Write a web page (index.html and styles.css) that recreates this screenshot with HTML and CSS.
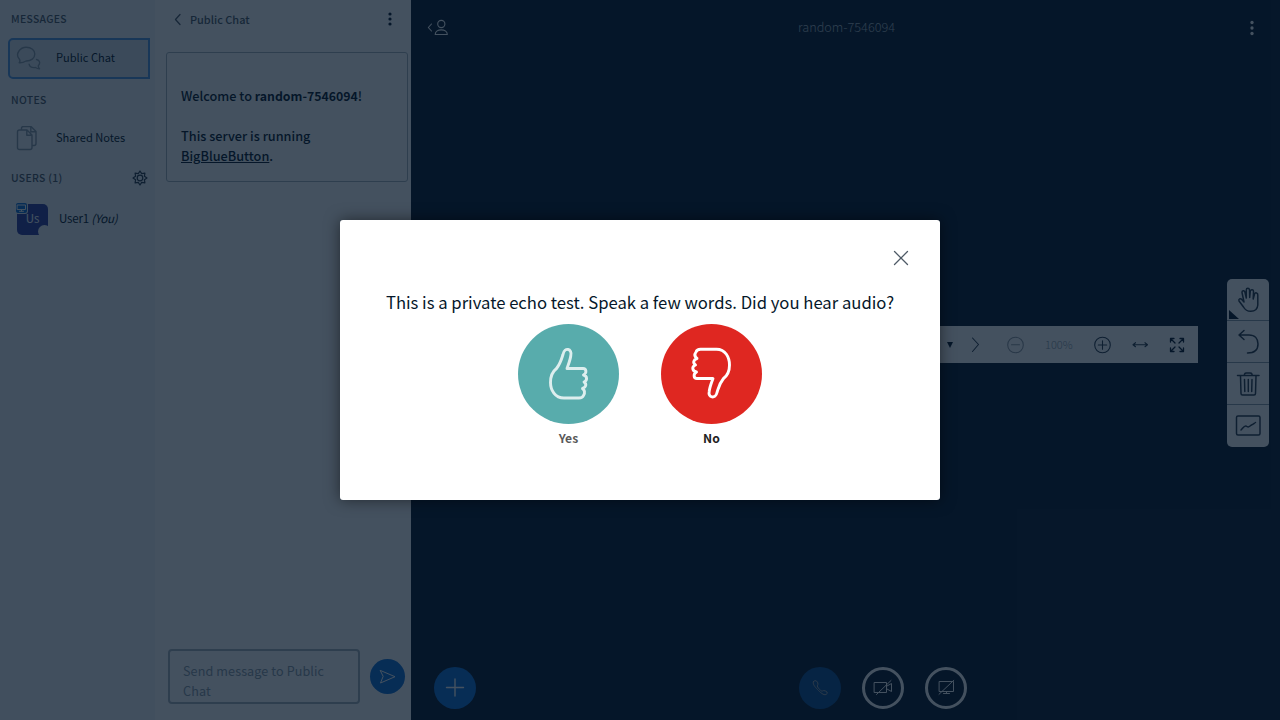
FILE: index.html
```html
<!DOCTYPE html>
<html lang="en">
<head>
<meta charset="utf-8">
<title>random-7546094</title>
<link rel="stylesheet" href="styles.css">
</head>
<body>
<div class="app">
  <aside class="sidebar">
    <h2 class="heading">MESSAGES</h2>
    <div class="item item-active">
      <svg class="item-icon" width="26" height="26" viewBox="0 0 26 26"><path d="M3.200 16.700 C4.500 15 4.300 14.200 3.100 12.800 C-1 8 4 1.300 10.200 1.300 C15.500 1.300 18.800 4.300 18.800 8 C18.800 12.200 15 15.200 10 15 C7.500 16.500 5.500 16.900 3.200 16.700 Z M20.500 13.500 C24 14 24.500 17.500 22.300 19.700 C22.200 21.100 22.500 21.800 23.500 22.800 C21.700 22.900 20.700 22.300 19.500 21.500 C16 21.900 13.500 20.500 13.100 18.100"/></svg>
      <span class="label-text">Public Chat</span>
    </div>
    <h2 class="heading heading-notes">NOTES</h2>
    <div class="item item-notes">
      <svg class="item-icon" width="26" height="26" viewBox="0 0 26 26"><path d="M1.500 6 Q1.500 4 3.500 4 H11 L16 9 V21.500 Q16 23.500 14 23.500 H3.500 Q1.500 23.500 1.500 21.500 Z M10.800 4 V9.200 H16 M5.500 3.500 V2.500 Q5.500 .5 7.500 .5 H15 L20 5.500 V17.500 Q20 19.500 18 19.500 H16.500 M14.800 .5 V5.700 H20"/></svg>
      <span class="label-text">Shared Notes</span>
    </div>
    <div class="users-head">
      <h2 class="heading heading-users">USERS (1)</h2>
      <svg class="gear" width="16" height="16" viewBox="0 0 16 16"><path d="M8 1 L9.700 3.600 L12.900 3.100 L12.400 6.300 L15 8 L12.400 9.700 L12.900 12.900 L9.700 12.400 L8 15 L6.300 12.400 L3.100 12.900 L3.600 9.700 L1 8 L3.600 6.300 L3.100 3.100 L6.300 3.600 Z"/><circle cx="8" cy="8" r="2.800"/></svg>
    </div>
    <div class="user">
      <div class="avatar">Us
        <svg class="presenter" width="11" height="10" viewBox="0 0 11 10"><path d="M1.500 2 H9.500 V6.500 H1.500 Z M5.500 6.500 V8 M3.500 8.300 H7.500"/></svg>
        <span class="presence"></span>
      </div>
      <span class="user-name">User1 <i>(You)</i></span>
    </div>
  </aside>

  <section class="chat">
    <header class="chat-head">
      <svg width="8" height="14" viewBox="0 0 8 14"><path d="M6 2.500 L1.500 7.500 L6 12.500"/></svg>
      <h1 class="chat-title">Public Chat</h1>
      <svg class="dots" width="4" height="14" viewBox="0 0 4 14"><circle cx="2" cy="2" r="1.600"/><circle cx="2" cy="7" r="1.600"/><circle cx="2" cy="12" r="1.600"/></svg>
    </header>
    <div class="welcome">
      <p>Welcome to <b>random-7546094</b>!</p>
      <p>This server is running <u>BigBlueButton</u>.</p>
    </div>
    <footer class="composer">
      <div class="message-box">Send message to Public Chat</div>
      <div class="send"><svg width="18" height="16" viewBox="0 0 18 16"><path d="M1.500 1.500 L16 7.700 L1.500 14 L4 7.700 Z"/></svg></div>
    </footer>
  </section>

  <main class="stage">
    <header class="nav">
      <svg class="nav-user" width="22" height="18" viewBox="0 0 22 18"><path d="M4.500 5 L1.300 8.500 L4.500 12 M8.200 15.500 C8.200 9.300 20.300 9.300 20.300 15.500 Z"/><circle cx="14.300" cy="5" r="3.600"/></svg>
      <span class="nav-title">random-7546094</span>
      <svg class="nav-dots dots" width="4" height="16" viewBox="0 0 4 16"><circle cx="2" cy="2.500" r="1.650"/><circle cx="2" cy="8" r="1.650"/><circle cx="2" cy="13.500" r="1.650"/></svg>
    </header>
    <div class="workspace">
      <div class="slide-bar">
        <svg class="line" width="258" height="37" viewBox="0 0 258 37"><path class="solid" d="M7 16 H13 L10 22 Z"/><path d="M32.500 12 L38.500 18.500 L32.500 25.500"/><g class="off"><circle cx="75.500" cy="19" r="7.800"/><path d="M71.500 18.700 H79.500"/></g><circle cx="162.500" cy="19" r="7.800"/><path d="M158.300 19 H166.700 M162.500 14.800 V23.200 M193 18.700 H207.500 M195.500 16.700 L193 18.700 L195.500 20.700 M205 16.700 L207.500 18.700 L205 20.700"/><path class="heavy" d="M230.500 16 V12.500 H234 M230.500 12.500 L235 17 M240 12.500 H243.500 V16 M243.500 12.500 L239 17 M230.500 22 V25.500 H234 M230.500 25.500 L235 21 M240 25.500 H243.500 V22 M243.500 25.500 L239 21"/></svg>
        <span class="zoom-value">100%</span>
      </div>
      <div class="tools">
        <div class="tool"><svg width="42" height="42" viewBox="0 0 42 42"><path class="solid" d="M2 31 V40 H12 Z"/><path d="M16.500 28 L12 22 C11.200 20 13.400 18.800 14.800 20.500 L17 23 L15 13.500 C14.800 11.500 17.300 11 17.900 13 L19.300 19 V11 C19.300 8.700 22.300 8.700 22.500 11 L22.700 18.500 L23.300 12 C24 10 26.700 10.500 26.500 12.500 L26.200 20 L27.500 15 C28.300 13 31 13.800 30.800 16 V26 C30.500 30 27.800 32.300 23.800 32.300 C20.500 32.300 18 30.800 16.500 28 Z"/></svg></div>
        <div class="tool"><svg width="42" height="42" viewBox="0 0 42 42"><path d="M17 9.500 L12 14 L17 18.500 M12 14 H22 C28 14 31 18 31 23 C31 29 27 32 20.500 32"/></svg></div>
        <div class="tool"><svg width="42" height="42" viewBox="0 0 42 42"><path d="M10.500 12.500 H32 M17.500 12 V11 Q18 10 19.500 10 H23 Q24.500 10 25 11 V12 M13.500 13 L14 30.500 Q14 32 15.500 32 H27 Q28.500 32 28.500 30.500 L29 13 M17.500 16.500 L17.800 28.500 M21.300 16.500 V28.500 M25 16.500 L24.700 28.500"/></svg></div>
        <div class="tool"><svg width="42" height="42" viewBox="0 0 42 42"><rect x="9.500" y="11" width="23.500" height="19" rx="1.500"/><path d="M14 25 C16 23 17 20.500 19 21 C22 23.500 22.500 21 24.500 20 C26 19.500 27 18.500 28.500 17.500"/></svg></div>
      </div>
    </div>
    <footer class="actions">
      <div class="round plus"><svg width="20" height="20" viewBox="0 0 20 20"><path d="M1.500 9.500 H18.500 M10 1 V18"/></svg></div>
      <div class="media">
        <div class="round phone"><svg width="20" height="20" viewBox="0 0 20 20"><path d="M3.500 3.500 Q5 1.800 6.500 3 Q8.500 5 7.900 6.500 C6.500 8.500 8 9.500 9.500 11.300 C11 13 12 13.500 13.500 12.600 Q15 12.300 17 14 Q18 15.500 16 16.500 C13.500 17.500 10.500 14.500 7.500 11.500 C5 9 2 5.500 3.500 3.500 Z"/></svg></div>
        <div class="round outlined"><svg width="20" height="20" viewBox="0 0 20 20"><path d="M1.500 4.500 H13.500 V14.500 H1.500 Z M14 8 L18.500 5.500 V13.500 L14 11 M3.500 16.500 L18 2.500"/></svg></div>
        <div class="round outlined"><svg width="20" height="20" viewBox="0 0 20 20"><path d="M3.500 3.500 H17.500 V13.500 H3.500 Z M10.500 13.500 V15.500 M7.500 15.500 H13.500 M3 16.300 L17.800 2.300"/></svg></div>
      </div>
    </footer>
  </main>
</div>

<div class="overlay">
  <div class="modal">
    <svg class="close" width="16" height="16" viewBox="0 0 16 16"><path d="M1.500 1.500 L14.500 14.500 M14.500 1.500 L1.500 14.500"/></svg>
    <p class="question">This is a private echo test. Speak a few words. Did you hear audio?</p>
    <div class="answers">
      <div class="answer answer-yes">
        <div class="disc disc-yes"><svg width="44" height="56" viewBox="0 0 44 56"><path d="M20 22.500 H36 C39.500 22.500 40 27 36.500 29 C40.500 30 40.500 34.500 37 36 C40 38 39 41.500 35.500 42.500 C38 44.500 38 47 36.500 49.500 Q35.500 52 32 52 H17 C8 52 3.500 44 3.500 36.500 C3.500 30.500 5 26 9.500 22.500 C13.500 17.500 14.500 13 16 8.500 C17.500 .7 25.500 2.500 23.800 9.500 C23.300 14 21.500 18 20 22.500 Z"/></svg></div>
        <span class="answer-label">Yes</span>
      </div>
      <div class="answer">
        <div class="disc disc-no"><svg width="44" height="56" viewBox="0 0 44 56"><path d="M21 23.500 H37 C40.500 23.500 41 28 37.500 30 C42 31 42.500 35.500 38.500 37 C41.500 39 40.500 42.500 37 43.500 C39.500 45.500 39.500 48 38 50 Q37 52.800 33.500 52.800 H17.500 C8.500 52.800 4.500 44.500 4.500 37 C4.500 31 6.500 26.500 10.500 23.500 C15 18 15.500 14 17 9.500 C18.500 2.500 26.300 4.500 24.800 10.500 C24.300 15 22.800 18.500 21 23.500 Z"/></svg></div>
        <span class="answer-label">No</span>
      </div>
    </div>
  </div>
</div>
</body>
</html>
```

FILE: styles.css
```css
* { box-sizing: border-box; }
body {
  margin: 0;
  overflow: hidden;
  font-family: "Noto Sans CJK SC", "Open Sans", sans-serif;
  font-size: 12px;
  color: #06172a;
}
h1, h2, p { margin: 0; }
svg { display: block; flex: none; fill: none; stroke: currentColor; stroke-linecap: round; stroke-linejoin: round; }
.app { display: flex; width: 1280px; height: 720px; }

.sidebar { width: 155px; flex: none; background: #f3f6f9; padding-top: 9px; }
.heading { height: 20px; padding-left: 11px; font-size: 10.4px; line-height: 20px; font-weight: 500; letter-spacing: .3px; color: #4e5a66; }
.item { display: flex; align-items: center; height: 41px; margin: 9px 5px 0 8px; padding-left: 8px; white-space: nowrap; }
.item-active { background: #dce4ec; border: 2px solid #4f96e4; border-radius: 5px 0 0 5px; padding-left: 6px; }
.item-icon { color: #8b9aa8; margin-right: 14px; stroke-width: 1.4; }
.label-text { font-size: 11.1px; line-height: 18px; padding-bottom: 4px; }
.heading-notes { margin-top: 11px; }
.item-notes { margin-top: 8px; }
.users-head { display: flex; align-items: center; justify-content: space-between; padding-right: 7px; margin-top: 9px; }
.gear { color: #2a394a; stroke-width: 1.2; }
.user { display: flex; align-items: center; margin-top: 15px; padding-left: 17px; height: 32px; }
.avatar { position: relative; width: 31px; height: 31px; border-radius: 5px; background: #303f9f; color: #fff; font-size: 11.5px; line-height: 29px; text-align: center; }
.presenter { position: absolute; left: -1px; top: -1px; background: #0f70d7; color: #fff; border-radius: 2px; box-shadow: 0 0 0 1px #f3f6f9; }
.presence { position: absolute; right: -3px; bottom: -3px; width: 13px; height: 13px; border-radius: 50%; background: #f3f6f9; }
.user-name { margin-left: 11px; padding-bottom: 3px; font-size: 11.5px; letter-spacing: -.2px; }

.chat { width: 256px; flex: none; background: #fff; display: flex; flex-direction: column; }
.chat-head { display: flex; align-items: center; height: 38px; padding: 0 19.500px 0 19px; color: #4e5a66; }
.chat-head svg { stroke-width: 1.3; }
.chat-title { margin-left: 8px; font-size: 10.95px; line-height: 20px; font-weight: 500; flex: 1; }
.chat-head .dots, .nav .dots { stroke-width: 0; }
.dots { fill: currentColor; stroke: none; color: #06172a; }
.welcome { margin: 14px 3px 0 11px; height: 130px; border: 1px solid #a7b3bd; border-radius: 3px; padding: 33px 60px 0 14px; font-size: 12.7px; line-height: 20px; font-weight: 500; color: #06172a; }
.welcome p { margin-right: -30px; }
.welcome p + p { margin: 20px 0 0; }
.welcome b { font-weight: 700; font-size: 12.3px; }
.welcome u { text-underline-offset: 1px; }
.composer { display: flex; margin-top: auto; padding: 0 6px 16px 13px; justify-content: space-between; align-items: center; }
.message-box { width: 192px; height: 55px; border: 2px solid #a7b3bd; border-radius: 4px; padding: 10px 20px 0 13px; font-size: 12.6px; line-height: 20px; letter-spacing: .1px; color: #8b9aa8; overflow: hidden; }
.send { width: 35px; height: 35px; border-radius: 50%; background: #0f70d7; color: #fff; display: flex; align-items: center; justify-content: center; }

.stage { flex: 1; display: flex; flex-direction: column; background: #06172a; color: #fff; }
.nav { height: 56px; display: flex; align-items: center; justify-content: space-between; padding: 0 26px 0 16px; }
.nav-user { stroke-width: 1.1; }
.nav-title { font-size: 12.7px; font-weight: 300; color: #a7b3bd; padding: 0 6px 3px 0; }
.nav-dots { color: #fff; }
.workspace { flex: 1; display: flex; justify-content: flex-end; align-items: flex-start; padding: 223px 11px 0 0; }
.slide-bar { position: relative; display: flex; justify-content: flex-end; width: 516px; height: 37px; margin: 47px 29px 0 0; background: #fff; color: #4e5a66; }
.solid { fill: #06172a; stroke: none; }
.off { opacity: .5; }
.heavy { stroke: #06172a; stroke-width: 1.3; }
.line { color: #2a394a; stroke-width: 1.1; }
.zoom-value { position: absolute; left: 363px; top: 8px; font-size: 11px; line-height: 20px; font-weight: 300; color: #8b9aa8; }
.tools { width: 42px; height: 168px; border-radius: 5px; background: #fff; color: #2a394a; overflow: hidden; }
.tool { height: 42px; border-bottom: 1px solid #8b9aa8; }
.tool:last-child { border-bottom: 0; }
.tool svg { stroke-width: 1.5; }
.actions { height: 64px; display: flex; align-items: flex-start; padding: 11px 0 0 23px; }
.round { width: 42px; height: 42px; border-radius: 50%; display: flex; align-items: center; justify-content: center; }
.plus { background: #0f70d7; }
.plus svg { stroke-width: 1.4; }
.media { display: flex; gap: 21px; margin-left: 323px; }
.phone { background: #0f70d7; opacity: .6; }
.outlined { border: 3px solid #fff; }

.overlay { position: absolute; inset: 0; display: flex; align-items: center; justify-content: center; background: rgba(6, 23, 42, .75); }
.modal { width: 600px; height: 280px; background: #fff; border-radius: 3px; box-shadow: 0 0 15px rgba(0, 0, 0, .5); display: flex; flex-direction: column; align-items: center; padding-top: 29.500px; }
.close { align-self: flex-end; margin-right: 31px; color: #4e5a66; stroke-width: 1.3; }
.question { margin-top: 23px; font-size: 16.67px; line-height: 26px; white-space: nowrap; }
.answers { display: flex; gap: 42px; margin-top: 9.500px; }
.answer { display: flex; flex-direction: column; align-items: center; width: 101px; }
.answer-yes { opacity: .65; }
.disc { width: 101px; height: 100px; border-radius: 50%; color: #fff; display: flex; align-items: center; justify-content: center; }
.disc svg { stroke-width: 2.9; }
.disc-yes { background: #008081; }
.disc-yes svg { opacity: .8; }
.disc-no { background: #df2721; }
.disc-no svg { transform: rotate(180deg); }
.answer-label { margin-top: 4px; font-size: 12.2px; line-height: 20px; font-weight: 700; color: #222; }
.answer-yes .answer-label { color: #000; }
```
